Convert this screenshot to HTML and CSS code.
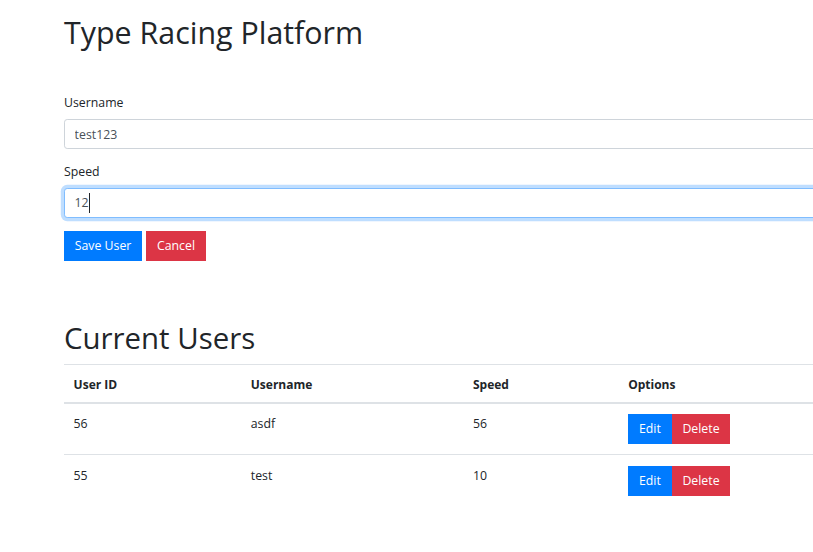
FILE: index.html
```html
<!DOCTYPE html>
<html lang="en">
<head>
<meta charset="utf-8">
<title>Type Racing Platform</title>
<link rel="stylesheet" href="styles.css">
</head>
<body>
<div class="page">
  <h1 class="title">Type Racing Platform</h1>
  <form class="user-form">
    <div class="form-group">
      <label class="form-label" for="username">Username</label>
      <input class="form-control" id="username" type="text" value="test123">
    </div>
    <div class="form-group">
      <label class="form-label" for="speed">Speed</label>
      <div class="field-wrap">
        <input class="form-control is-focused" id="speed" type="text" value="12">
        <span class="caret"></span>
      </div>
    </div>
    <div class="actions">
      <button type="button" class="btn btn-primary">Save User</button>
      <button type="button" class="btn btn-danger">Cancel</button>
    </div>
  </form>

  <h2 class="title section-title">Current Users</h2>
  <table class="table">
    <thead>
      <tr>
        <th class="c1">User ID</th>
        <th class="c2">Username</th>
        <th class="c3">Speed</th>
        <th class="c4">Options</th>
      </tr>
    </thead>
    <tbody>
      <tr>
        <td>56</td>
        <td>asdf</td>
        <td>56</td>
        <td><div class="btn-group"><button type="button" class="btn btn-primary">Edit</button><button type="button" class="btn btn-danger">Delete</button></div></td>
      </tr>
      <tr>
        <td>55</td>
        <td>test</td>
        <td>10</td>
        <td><div class="btn-group"><button type="button" class="btn btn-primary">Edit</button><button type="button" class="btn btn-danger">Delete</button></div></td>
      </tr>
    </tbody>
  </table>
</div>
</body>
</html>
```

FILE: styles.css
```css
html, body {
  margin: 0;
  padding: 0;
  background: #fff;
  overflow: hidden;
}

body {
  font-family: "Open Sans", "Noto Sans", sans-serif;
  font-size: 12.3px;
  line-height: 19.2px;
  color: #212529;
}

.page {
  width: 1000px;
  padding: 14px 0 0 64px;
}

.title {
  font-size: 30.4px;
  font-weight: 400;
  line-height: 38.4px;
  margin: 0 0 6.4px;
}

.section-title {
  font-size: 29.4px;
  margin-top: 58px;
}

.user-form {
  margin-top: 41px;
}

.form-group {
  margin-bottom: 12.8px;
}

.form-label {
  display: block;
  margin-bottom: 6.4px;
}

.field-wrap {
  position: relative;
}

.form-control {
  display: block;
  box-sizing: border-box;
  width: 100%;
  height: 30.4px;
  padding: 4.8px 9.6px;
  font-family: inherit;
  font-size: 12.3px;
  line-height: 19.2px;
  color: #495057;
  background: #fff;
  border: 1px solid #ced4da;
  border-radius: 3.2px;
  outline: none;
}

.form-control.is-focused {
  border-color: #80bdff;
  box-shadow: 0 0 0 3.2px rgba(0, 123, 255, 0.25);
}

.caret {
  position: absolute;
  left: 25px;
  top: 5px;
  width: 1px;
  height: 20px;
  background: #212529;
}

.actions {
  display: flex;
  gap: 4px;
}

.btn {
  display: inline-block;
  height: 30.4px;
  padding: 0 10.8px;
  font-family: inherit;
  font-size: 12.3px;
  line-height: 30.4px;
  color: #fff;
  border: 0;
  border-radius: 0;
  cursor: pointer;
}

.btn-primary {
  background: #007bff;
}

.btn-danger {
  background: #dc3545;
}

.table {
  width: 900px;
  border-collapse: collapse;
}

.table th,
.table td {
  padding: 10.2px 9.6px;
  text-align: left;
  vertical-align: top;
  border-top: 1px solid #dee2e6;
}

.table th {
  padding-top: 10px;
  padding-bottom: 7.2px;
  font-size: 12px;
  font-weight: 700;
  border-bottom: 2px solid #dee2e6;
}

.table .c1 { width: 158px; }
.table .c2 { width: 203px; }
.table .c3 { width: 136px; }

.btn-group {
  display: flex;
}
```
